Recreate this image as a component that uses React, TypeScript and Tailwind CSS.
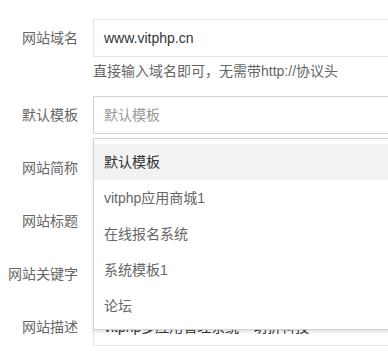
import React from 'react';

const labelCls =
  'w-[93px] shrink-0 pr-[15px] text-right text-[14px] leading-[38px] text-[#666]';
const inputCls =
  'h-[38px] w-[320px] shrink-0 border border-[#e6e6e6] bg-white pl-[10px] text-[14px] leading-[36px] text-[#333]';

const options = ['默认模板', 'vitphp应用商城1', '在线报名系统', '系统模板1', '论坛'];

export default function App() {
  return (
    <div
      className="relative h-[351px] w-[388px] overflow-hidden bg-white pt-[19px]"
      style={{ fontFamily: "'Liberation Sans', 'Noto Sans CJK SC', sans-serif" }}
    >
      {/* 网站域名 */}
      <div className="flex">
        <label className={labelCls}>网站域名</label>
        <div className={inputCls}>www.vitphp.cn</div>
      </div>
      <div className="mb-[15px] mt-[4px] pl-[93px] text-[14px] leading-[20px] text-[#666]">
        直接输入域名即可，无需带http://协议头
      </div>

      {/* 默认模板 */}
      <div className="relative mb-[15px] flex">
        <label className={labelCls}>默认模板</label>
        <div className={inputCls + ' !border-[#d2d2d2] !text-[#999]'}>默认模板</div>

        {/* 下拉 */}
        <div className="absolute left-[93px] top-[42px] z-10 w-[320px] border border-[#d2d2d2] bg-white py-[5px] shadow-[0_2px_4px_rgba(0,0,0,0.12)]">
          {options.map((o, i) => (
            <div
              key={o}
              className={
                'h-[36px] pl-[10px] text-[14px] leading-[36px] ' +
                (i === 0 ? 'bg-[#f2f2f2] text-[#333]' : 'text-[#666]')
              }
            >
              {o}
            </div>
          ))}
        </div>
      </div>

      <div className="mb-[15px] flex">
        <label className={labelCls}>网站简称</label>
        <div className={inputCls}></div>
      </div>
      <div className="mb-[15px] flex">
        <label className={labelCls}>网站标题</label>
        <div className={inputCls}></div>
      </div>
      <div className="mb-[15px] flex">
        <label className={labelCls}>网站关键字</label>
        <div className={inputCls}></div>
      </div>
      <div className="mb-[15px] flex">
        <label className={labelCls}>网站描述</label>
        <div className={inputCls}>vitphp多应用管理系统—萌折科技</div>
      </div>
    </div>
  );
}
